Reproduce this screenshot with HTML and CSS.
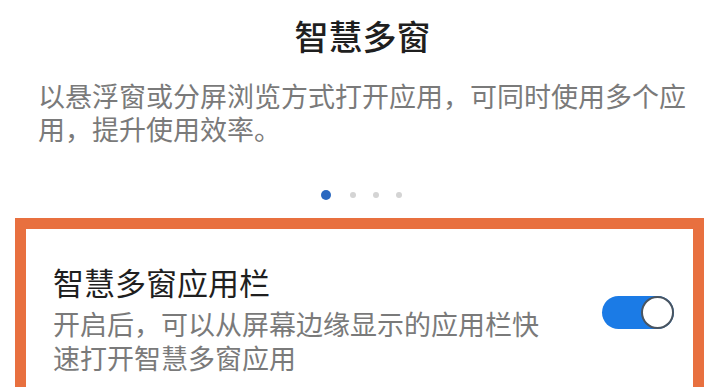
FILE: index.html
```html
<!DOCTYPE html>
<html lang="zh">
<head>
<meta charset="utf-8">
<link rel="stylesheet" href="styles.css">
</head>
<body>
<main class="page">
  <h1 class="hero-title">智慧多窗</h1>
  <p class="hero-desc">以悬浮窗或分屏浏览方式打开应用，可同时使用多个应用，提升使用效率。</p>
  <div class="dots">
    <span class="dot dot-active"></span>
    <span class="dot"></span>
    <span class="dot"></span>
    <span class="dot"></span>
  </div>
  <section class="card">
    <div class="row">
      <div class="row-text">
        <div class="row-title">智慧多窗应用栏</div>
        <div class="row-sub">开启后，可以从屏幕边缘显示的应用栏快速打开智慧多窗应用</div>
      </div>
      <div class="toggle"><span class="knob"></span></div>
    </div>
  </section>
</main>
</body>
</html>
```
FILE: styles.css
```css
html, body {
  margin: 0;
  padding: 0;
  background: #ffffff;
  overflow: hidden;
}
body {
  font-family: "Noto Sans CJK SC", "Noto Sans", sans-serif;
}
.page {
  width: 717px;
  height: 387px;
  overflow: hidden;
}
.hero-title {
  margin: 0;
  padding-top: 16px;
  font-size: 34px;
  line-height: 40px;
  font-weight: 500;
  color: #1f1f1f;
  text-align: center;
  padding-left: 8px;
}
.hero-desc {
  margin: 23px 0 0;
  padding: 0 20px 0 38px;
  font-size: 27px;
  line-height: 33px;
  color: #7a7a7a;
}
.dots {
  margin-top: 45px;
  height: 10px;
  display: flex;
  justify-content: center;
  align-items: center;
  gap: 17px;
  padding-left: 6px;
}
.dot {
  width: 6px;
  height: 6px;
  border-radius: 50%;
  background: #d4d4d4;
}
.dot-active {
  width: 10px;
  height: 10px;
  background: #2a68c0;
  margin-right: 2px;
}
.card {
  margin: 18px 13px 0 15px;
  border: 11px solid #e8703f;
  padding: 35px 19px 40px 27px;
  background: #fff;
}
.row {
  display: flex;
  align-items: center;
  justify-content: space-between;
}
.row-text {
  width: 500px;
}
.row-title {
  font-size: 31px;
  line-height: 36px;
  color: #1f1f1f;
}
.row-sub {
  margin-top: 7px;
  font-size: 27px;
  line-height: 34px;
  color: #7a7a7a;
}
.toggle {
  position: relative;
  width: 72px;
  height: 33px;
  border-radius: 17px;
  background: #1b7be6;
  margin-bottom: 14px;
  box-sizing: border-box;
}
.knob {
  position: absolute;
  right: 0;
  top: 0;
  width: 33px;
  height: 33px;
  box-sizing: border-box;
  border-radius: 50%;
  background: #ffffff;
  border: 2px solid #4a5560;
}
```
